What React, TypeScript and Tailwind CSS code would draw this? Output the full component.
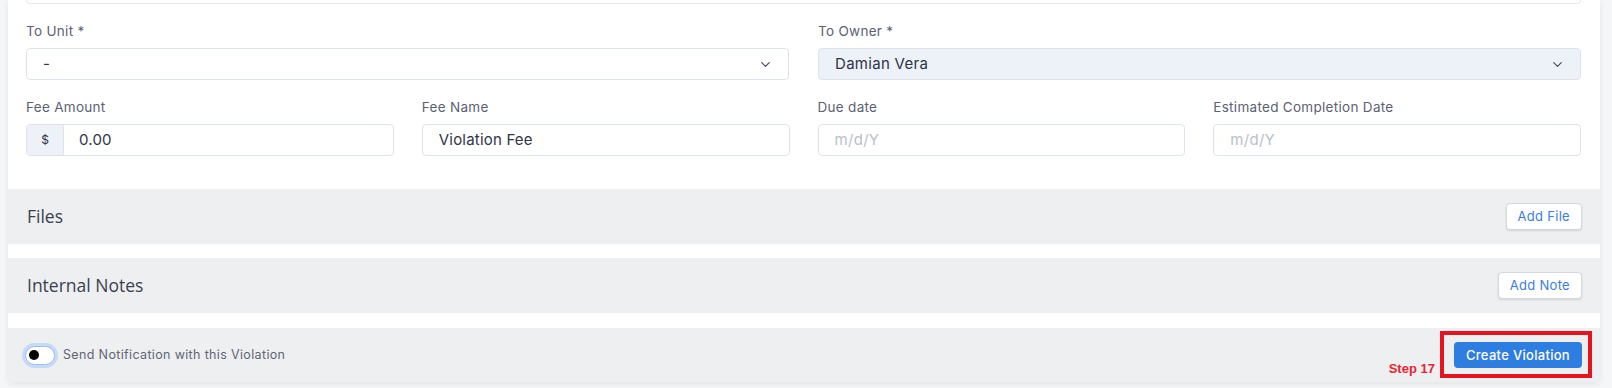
import React from 'react';
import { ChevronDown } from 'lucide-react';

const Label = ({ children }: { children: React.ReactNode }) => (
  <label className="block text-[13.5px] leading-[18px] tracking-[0.3px] text-[#5b6174] mb-[8px]">{children}</label>
);

const SelectBox = ({ value, filled }: { value: string, filled?: boolean }) => (
  <div className={`h-[32px] flex items-center justify-between pl-4 pr-[15px] rounded-[4px] border border-[#dde4ee] ${filled ? 'bg-[#edf1f8]' : 'bg-white'}`}>
    <span className="text-[15px] tracking-[0.3px] text-[#2f3447]">{value}</span>
    <ChevronDown size={15} strokeWidth={2} className="text-[#4b5060]" />
  </div>
);

const TextBox = ({ value, placeholder }: { value?: string, placeholder?: string }) => (
  <div className="h-[32px] flex items-center pl-4 rounded-[4px] border border-[#dde4ee] bg-white">
    {value ? (
      <span className="text-[15px] tracking-[0.2px] text-[#2f3447]">{value}</span>
    ) : (
      <span className="text-[15px] tracking-[0.3px] text-[#b9c0cc]">{placeholder}</span>
    )}
  </div>
);

const SectionBar = ({ title, action }: { title: string, action: string }) => (
  <div className="h-[55px] bg-[#eeeff1] flex items-center justify-between pl-[19px] pr-[18px]">
    <span className="text-[17.5px] text-[#3a3f4e]" style={{ fontFamily: '"Open Sans", sans-serif' }}>{title}</span>
    <button className="h-[27px] px-[11px] bg-white border border-[#d3d7de] rounded-[4px] shadow-[0_1px_2px_rgba(0,0,0,0.12)] text-[13px] tracking-[0.3px] text-[#3b7de0]">
      {action}
    </button>
  </div>
);

export default function App() {
  return (
    <div className="min-h-[388px] bg-[#f5f6f8] pl-2 pr-3" style={{ fontFamily: 'Inter, "Noto Sans", sans-serif' }}>
      <div className="bg-white rounded-b-[6px] shadow-[0_2px_6px_rgba(0,0,0,0.08)] overflow-hidden">
        <div className="pl-[18px] pr-[19px] pb-[33px]">
          {/* tail of the field above */}
          <div className="h-[4px] border-x border-b border-[#e6e9ef] rounded-b-[4px]" />

          <div className="grid grid-cols-2 gap-x-[29px] mt-[18px]">
            <div>
              <Label>To Unit *</Label>
              <SelectBox value="-" />
            </div>
            <div>
              <Label>To Owner *</Label>
              <SelectBox value="Damian Vera" filled />
            </div>
          </div>

          <div className="grid grid-cols-4 gap-x-[28px] mt-[18px]">
            <div>
              <Label>Fee Amount</Label>
              <div className="h-[32px] flex rounded-[4px] border border-[#dde4ee] bg-white overflow-hidden">
                <span className="w-[37px] shrink-0 bg-[#edf1f8] border-r border-[#dde4ee] flex items-center justify-center text-[12px] text-[#2f3447]">$</span>
                <span className="flex items-center pl-[15px] text-[15px] tracking-[0.2px] text-[#2f3447]">0.00</span>
              </div>
            </div>
            <div>
              <Label>Fee Name</Label>
              <TextBox value="Violation Fee" />
            </div>
            <div>
              <Label>Due date</Label>
              <TextBox placeholder="m/d/Y" />
            </div>
            <div>
              <Label>Estimated Completion Date</Label>
              <TextBox placeholder="m/d/Y" />
            </div>
          </div>
        </div>

        <SectionBar title="Files" action="Add File" />
        <div className="h-[14px]" />
        <SectionBar title="Internal Notes" action="Add Note" />
        <div className="h-[15px]" />

        {/* Footer */}
        <div className="h-[54px] bg-[#eeeff1] flex items-center justify-between pl-[17px] pr-[18px]">
          <div className="flex items-center gap-[8px]">
            <span className="w-[30px] h-[19px] rounded-full bg-white border border-[#9dbdf0] ring-[3px] ring-[#c6d9f7] flex items-center pl-[3px]">
              <span className="w-[10px] h-[10px] rounded-full bg-black" />
            </span>
            <span className="text-[12.5px] tracking-[0.35px] text-[#5f6576]">Send Notification with this Violation</span>
          </div>
          <div className="relative">
            <button className="h-[26px] px-[12px] rounded-[4px] bg-[#2e7de1] text-white text-[13px] tracking-[0.3px] font-medium">
              Create Violation
            </button>
            <div className="absolute -left-[14px] -right-[10px] -top-[11px] -bottom-[10px] border-[4px] border-[#e6141f]" />
            <span
              className="absolute right-[calc(100%+19px)] top-[17px] text-[13px] font-bold text-[#e6262f] whitespace-nowrap"
              style={{ fontFamily: '"Liberation Sans", Arial, sans-serif' }}
            >
              Step 17
            </span>
          </div>
        </div>
      </div>
    </div>
  );
}
